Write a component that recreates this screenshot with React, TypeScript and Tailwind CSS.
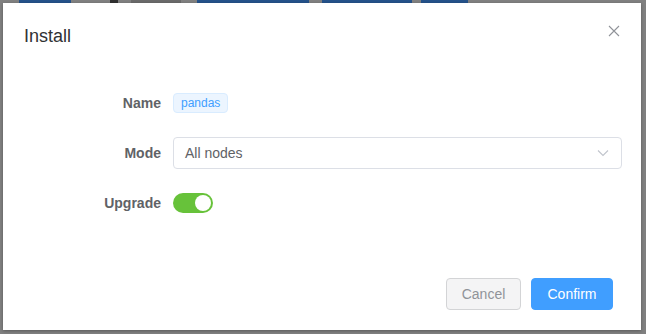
import React from "react";

export default function App() {
  return (
    <div
      className="relative h-[334px] w-[646px] overflow-hidden bg-[#808080]"
      style={{ fontFamily: '"Liberation Sans", Arial, Helvetica, sans-serif' }}
    >
      {/* dimmed page behind the dialog */}
      <div className="absolute left-0 top-0 flex h-[3px] w-full items-start">
        <div className="ml-[19px] h-[3px] w-[52px] bg-[#24528a]" />
        <div className="ml-[39px] h-[3px] w-[8px] bg-[#303030]" />
        <div className="ml-[13px] h-[3px] w-[50px] bg-[#6a6a6a]" />
        <div className="ml-[16px] h-[3px] w-[112px] bg-[#24528a]" />
        <div className="ml-[13px] h-[3px] w-[90px] bg-[#24528a]" />
        <div className="ml-[9px] h-[3px] w-[47px] bg-[#24528a]" />
      </div>

      <div className="absolute left-[3px] top-[3px] flex h-[327px] w-[638px] flex-col bg-white shadow-[0_1px_3px_rgba(0,0,0,0.3)]">
        <div className="relative pl-[21px] pt-[21px]">
          <div className="text-[18px] leading-[24px] text-[#303133]">Install</div>
          <button className="absolute right-[21px] top-[22px] flex h-[12px] w-[12px] items-center justify-center text-[#909399]">
            <svg width="12" height="12" viewBox="0 0 12 12" fill="none">
              <path d="M1 1L11 11M11 1L1 11" stroke="#909399" strokeWidth="1.1" />
            </svg>
          </button>
        </div>

        <div className="flex flex-col gap-[18px] pl-[20px] pr-[19px] pt-[39px]">
          <div className="flex h-8 items-center">
            <div className="w-[150px] pr-[12px] text-right text-[14px] font-bold text-[#606266]">Name</div>
            <span className="flex h-[20px] items-center rounded-[4px] border border-[#d9ecff] bg-[#ecf5ff] px-[7px] text-[12px] text-[#409eff]">
              pandas
            </span>
          </div>
          <div className="flex h-8 items-center">
            <div className="w-[150px] pr-[12px] text-right text-[14px] font-bold text-[#606266]">Mode</div>
            <div className="flex h-8 flex-1 items-center justify-between rounded-[4px] border border-[#dcdfe6] pl-[11px] pr-[12px] text-[14px] text-[#606266]">
              <span>All nodes</span>
              <svg width="12" height="8" viewBox="0 0 12 8" fill="none">
                <path d="M1 1.5L6 6.5L11 1.5" stroke="#c0c4cc" strokeWidth="1.1" />
              </svg>
            </div>
          </div>
          <div className="flex h-8 items-center">
            <div className="w-[150px] pr-[12px] text-right text-[14px] font-bold text-[#606266]">Upgrade</div>
            <div className="relative flex h-[20px] w-[40px] items-center justify-end rounded-full bg-[#67c23a] pr-[2px]">
              <div className="h-[16px] w-[16px] rounded-full bg-white" />
            </div>
          </div>
        </div>

        <div className="mt-auto flex justify-end gap-[10px] pb-[20px] pr-[28px]">
          <button className="h-8 w-[75px] rounded-[4px] border border-[#d3d4d6] bg-[#f4f4f5] text-[14px] text-[#909399]">
            Cancel
          </button>
          <button className="h-8 w-[82px] rounded-[4px] border border-[#409eff] bg-[#409eff] text-[14px] text-white">
            Confirm
          </button>
        </div>
      </div>
    </div>
  );
}
